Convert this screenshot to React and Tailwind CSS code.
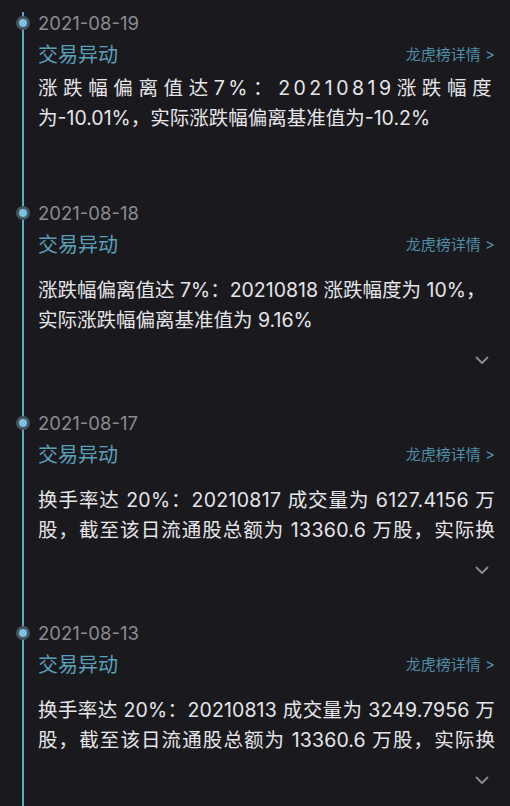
import React from "react";

const FONT = "font-['Inter','Noto_Sans_CJK_SC',sans-serif]";

function Chevron() {
  return (
    <svg width="14" height="9" viewBox="0 0 14 9" fill="none">
      <polyline points="1.5,1.5 7,7 12.5,1.5" stroke="#8d8d92" strokeWidth="1.8" strokeLinecap="round" strokeLinejoin="round" />
    </svg>
  );
}

function Header({ date }) {
  return (
    <>
      <div className="relative h-[24px] leading-[24px] text-[18.5px] text-[#8b8b90]">
        <span className="absolute left-[-22px] top-[5px] flex h-[14px] w-[14px] items-center justify-center rounded-full bg-[#45545e]">
          <span className="h-[8px] w-[8px] rounded-full bg-[#79c2e2]" />
        </span>
        {date}
      </div>
      <div className="mt-[6px] flex h-[28px] items-center justify-between">
        <span className="text-[20px] leading-[28px] text-[#5aa0ba]">交易异动</span>
        <span className="text-[15px] leading-[20px] text-[#4f8ea7]">龙虎榜详情 &gt;</span>
      </div>
    </>
  );
}

function Item({ date, children, chevron = true, first = false }) {
  return (
    <div className={`pl-[38px] pr-[15px] pt-[11px] ${first ? "pb-[57px]" : "pb-[30px]"}`}>
      <Header date={date} />
      {children}
      {chevron && (
        <div className="mt-[15px] flex h-[20px] items-center justify-end pr-[6px]">
          <Chevron />
        </div>
      )}
    </div>
  );
}

export default function App() {
  return (
    <div className={`relative min-h-[806px] w-full overflow-hidden bg-[#1a191e] ${FONT}`}>
      <div className="absolute left-[22px] top-[12px] bottom-0 w-[2px] bg-[#5ea7c7]" />
      <div className="relative flex flex-col">
        <Item date="2021-08-19" chevron={false} first>
          <p className="mt-[4px] text-[19.5px] leading-[30px] text-[#e6e6e8]">
            <span className="block whitespace-nowrap tracking-[3.5px] [text-align-last:justify]">
              涨跌幅偏离值达7%：20210819涨跌幅度
            </span>
            <span className="block">为-10.01%，实际涨跌幅偏离基准值为-10.2%</span>
          </p>
        </Item>
        <Item date="2021-08-18">
          <p className="mt-[16px] text-[19.5px] leading-[30px] text-[#e6e6e8]">
            <span className="block whitespace-nowrap">涨跌幅偏离值达 7%：20210818 涨跌幅度为 10%，</span>
            <span className="block">实际涨跌幅偏离基准值为 9.16%</span>
          </p>
        </Item>
        <Item date="2021-08-17">
          <p className="mt-[16px] max-h-[60px] overflow-hidden text-justify tracking-[0.3px] text-[19.5px] leading-[30px] text-[#e6e6e8]">
            换手率达 20%：20210817 成交量为 6127.4156 万股，截至该日流通股总额为 13360.6 万股，实际换手率为 45.86%
          </p>
        </Item>
        <Item date="2021-08-13">
          <p className="mt-[16px] max-h-[60px] overflow-hidden text-justify tracking-[0.12px] text-[19.5px] leading-[30px] text-[#e6e6e8]">
            换手率达 20%：20210813 成交量为 3249.7956 万股，截至该日流通股总额为 13360.6 万股，实际换手率为 24.32%
          </p>
        </Item>
      </div>
    </div>
  );
}
